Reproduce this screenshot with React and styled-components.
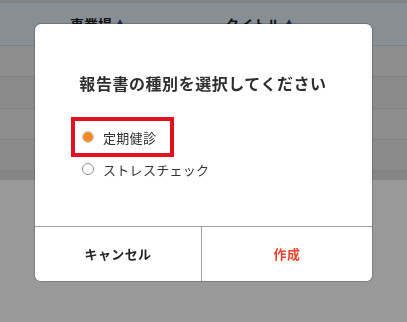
import React from "react";
import styled, { createGlobalStyle } from "styled-components";

const Global = createGlobalStyle`
  html, body { margin: 0; padding: 0; background: #ffffff; }
  body { font-family: "Noto Sans CJK JP", "Noto Sans", sans-serif; }
  * { box-sizing: border-box; }
`;

const Page = styled.div`
  width: 407px;
  height: 322px;
  overflow: hidden;
  background: #ffffff;
`;

const TopStrip = styled.div`
  height: 3px;
  background: #d6dde2;
`;

const HeaderRow = styled.div`
  height: 43px;
  background: #e1eef8;
  border-bottom: 1px solid #d2d8dc;
  display: flex;
  align-items: center;
  font-size: 14px;
  font-weight: 700;
  color: #222;
`;

const HeadCell = styled.div`
  width: ${(p) => p.$w}px;
  padding-left: ${(p) => p.$pl}px;
  display: flex;
  align-items: center;
  gap: 2px;
`;

const SortMark = styled.span`
  color: #2c4f86;
  font-size: 12px;
`;

const Row = styled.div`
  height: ${(p) => p.$h}px;
  background: ${(p) => p.$bg};
  border-bottom: 1px solid #d8d8d8;
`;

const Band = styled.div`
  height: 9px;
  background: #dedede;
`;

const Overlay = styled.div`
  position: fixed;
  inset: 0;
  background: rgba(0, 0, 0, 0.4);
  display: flex;
  justify-content: center;
  align-items: flex-start;
  padding-top: 24px;
`;

const Modal = styled.div`
  width: 337px;
  height: 257px;
  background: #fff;
  border-radius: 6px;
  box-shadow: 0 0 0 1px rgba(0, 0, 0, 0.18);
  display: flex;
  flex-direction: column;
  overflow: hidden;
`;

const Body = styled.div`
  flex: 1;
  display: flex;
  flex-direction: column;
  padding: 48px 0 0 47px;
`;

const Title = styled.h2`
  margin: 0 0 0 -4px;
  font-size: 16px;
  font-weight: 700;
  letter-spacing: 0.55px;
  color: #2e2e2e;
  line-height: 22px;
  width: 250px;
  text-align: center;
`;

const Options = styled.div`
  margin-top: 33px;
  display: flex;
  flex-direction: column;
  gap: 12px;
`;

const Option = styled.label`
  position: relative;
  display: flex;
  align-items: center;
  gap: 9px;
  height: 20px;
  font-size: 13px;
  letter-spacing: 0.3px;
  color: #333;
`;

const Radio = styled.span`
  width: 12px;
  height: 12px;
  border-radius: 50%;
  border: 1px solid ${(p) => (p.$checked ? "#c9c9c9" : "#8f8f8f")};
  background: #fff;
  display: flex;
  align-items: center;
  justify-content: center;
  &::after {
    content: "";
    width: 10px;
    height: 10px;
    border-radius: 50%;
    background: ${(p) => (p.$checked ? "#f28a21" : "transparent")};
  }
`;

const Highlight = styled.span`
  position: absolute;
  left: -11px;
  top: -10px;
  width: 103px;
  height: 40px;
  border: 4px solid #e3111f;
  pointer-events: none;
`;

const Footer = styled.div`
  height: 55px;
  border-top: 1px solid #a0a0a0;
  display: grid;
  grid-template-columns: 166px 1fr;
`;

const FooterButton = styled.button`
  border: none;
  border-left: ${(p) => (p.$divider ? "1px solid #a0a0a0" : "none")};
  background: #fff;
  font-family: "Noto Sans CJK JP", "Noto Sans", sans-serif;
  font-size: 13px;
  font-weight: 700;
  letter-spacing: 0.4px;
  color: ${(p) => (p.$primary ? "#e8442e" : "#222")};
  padding: 0 0 2px 0;
  cursor: pointer;
`;

export default function App() {
  return (
    <>
      <Global />
      <Page>
        <TopStrip />
        <HeaderRow>
          <HeadCell $w={150} $pl={70}>
            事業場<SortMark>▲</SortMark>
          </HeadCell>
          <HeadCell $w={200} $pl={75}>
            タイトル<SortMark>▲</SortMark>
          </HeadCell>
        </HeaderRow>
        <Row $h={31} $bg="#ececec" />
        <Row $h={32} $bg="#e6e6e6" />
        <Row $h={31} $bg="#ececec" />
        <Row $h={31} $bg="#e6e6e6" />
        <Band />
        <Overlay>
          <Modal>
            <Body>
              <Title>報告書の種別を選択してください</Title>
              <Options>
                <Option>
                  <Radio $checked />
                  定期健診
                  <Highlight />
                </Option>
                <Option>
                  <Radio />
                  ストレスチェック
                </Option>
              </Options>
            </Body>
            <Footer>
              <FooterButton>キャンセル</FooterButton>
              <FooterButton $divider $primary>
                作成
              </FooterButton>
            </Footer>
          </Modal>
        </Overlay>
      </Page>
    </>
  );
}
